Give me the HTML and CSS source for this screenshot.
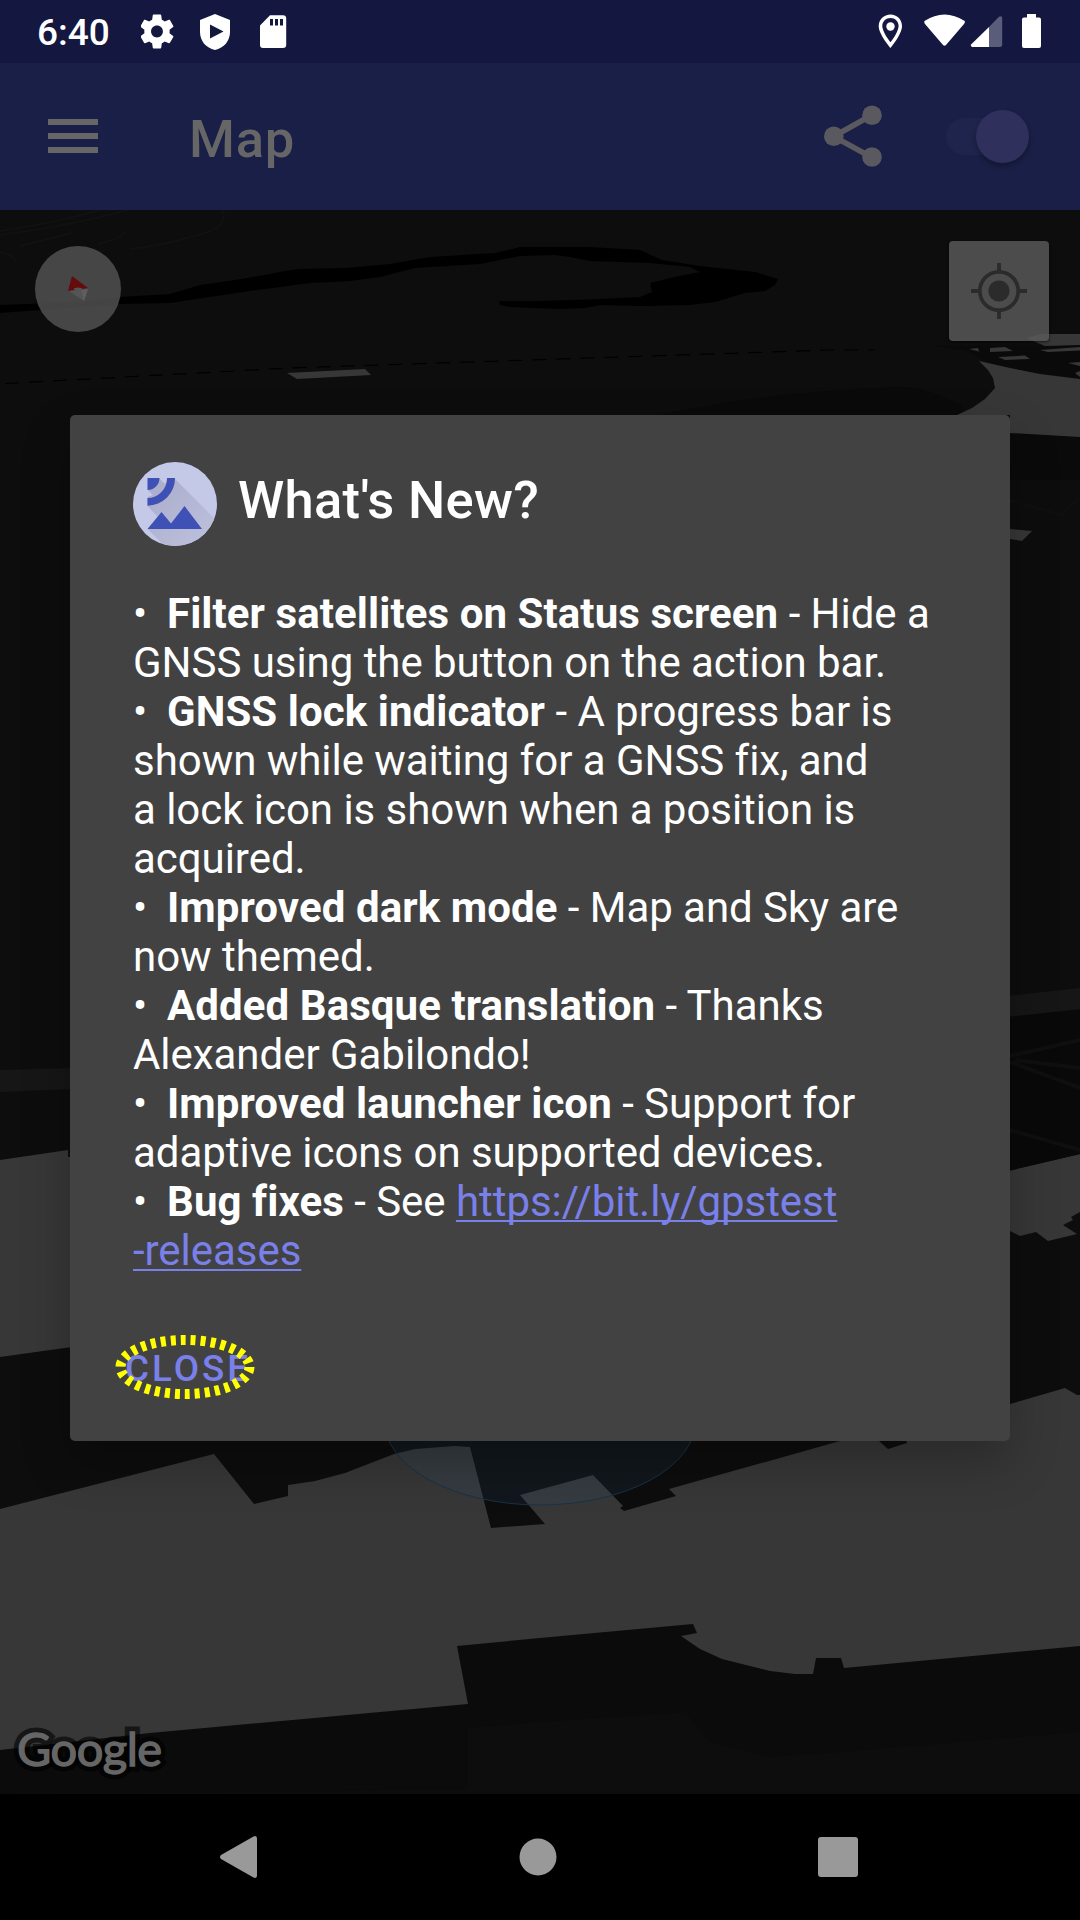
FILE: index.html
```html
<!DOCTYPE html>
<html lang="en">
<head>
<meta charset="utf-8">
<title>Map</title>
<link rel="stylesheet" href="styles.css">
</head>
<body>
<div class="screen">
  <header class="status">
    <span class="clock">6:40</span>
    <svg class="status-left" width="146" height="36" viewBox="141 14 146 36" fill="#fff">
      <g transform="translate(136.7 11.2) scale(1.69)"><path d="M19.43 12.98c.04-.32.07-.64.07-.98s-.03-.66-.07-.98l2.11-1.65c.19-.15.24-.42.12-.64l-2-3.46c-.12-.22-.39-.3-.61-.22l-2.49 1c-.52-.4-1.08-.73-1.69-.98l-.38-2.65C14.46 2.18 14.25 2 14 2h-4c-.25 0-.46.18-.49.42l-.38 2.65c-.61.25-1.17.59-1.69.98l-2.49-1c-.23-.09-.49 0-.61.22l-2 3.46c-.13.22-.07.49.12.64l2.11 1.65c-.04.32-.07.65-.07.98s.03.66.07.98l-2.11 1.65c-.19.15-.24.42-.12.64l2 3.46c.12.22.39.3.61.22l2.49-1c.52.4 1.08.73 1.69.98l.38 2.65c.03.24.24.42.49.42h4c.25 0 .46-.18.49-.42l.38-2.65c.61-.25 1.17-.59 1.69-.98l2.49 1c.23.09.49 0 .61-.22l2-3.46c.12-.22.07-.49-.12-.64l-2.11-1.65zM12 15.5c-1.93 0-3.5-1.57-3.5-3.5s1.57-3.5 3.5-3.5 3.5 1.57 3.5 3.5-1.57 3.5-3.5 3.5z"/></g>
      <path fill-rule="evenodd" d="M215 14 230 20V32C230 41 224 48 215 50 206 48 200 41 200 32V20ZM210 24.500V38.500L223.500 31.500Z"/>
      <path fill-rule="evenodd" d="M270 15.300H283Q286.200 15.300 286.200 18.300V45Q286.200 48 283 48H263Q260 48 260 45V25.500ZM270 19V25.500H273V19ZM275 19V25.500H278V19ZM280 19V25.500H283V19Z"/>
    </svg>
    <svg class="status-right" width="164" height="36" viewBox="878 14 164 36" fill="#fff">
      <path fill-rule="evenodd" d="M890.500 14.500C897 14.500 902 19.500 902 26 902 34.500 890.500 48 890.500 48S878.700 34.500 878.700 26C878.700 19.500 884 14.500 890.500 14.500ZM890.500 18C886 18 882.300 21.500 882.300 26 882.300 30.500 887 38 890.500 42.300 894 38 898.600 30.500 898.600 26 898.600 21.500 895 18 890.500 18Z"/>
      <circle cx="890.500" cy="26.500" r="4.200"/>
      <path d="M924.500 21Q944.500 8 964.700 21 965.300 22.500 964 24L946 45Q944.500 46.500 943 45L925 24Q923.800 22.500 924.500 21Z"/>
      <path d="M989 27V47H972Q970 46 971.300 44.300Z"/><path fill-opacity=".3" d="M989 27 999 16.800Q1002 15 1002.200 18V45Q1002 47 1000 47H989Z"/>
      <path d="M1027 14H1036V17.500H1039Q1041 17.500 1041 19.500V46Q1041 48 1039 48H1024Q1022 48 1022 46V19.500Q1022 17.500 1024 17.500H1027Z"/>
    </svg>
  </header>

  <div class="appbar">
    <div class="menu"><i></i><i></i><i></i></div>
    <h1>Map</h1>
    <svg class="share" width="58" height="63" viewBox="824 105 58 63" fill="#59595f">
      <path d="M872 115 833.500 136.500 872 157.500" fill="none" stroke="#59595f" stroke-width="5.500"/>
      <circle cx="872" cy="115.300" r="9.800"/><circle cx="833.800" cy="136.300" r="9.800"/><circle cx="872" cy="157" r="9.800"/>
    </svg>
    <div class="switch"><i></i></div>
  </div>

  <main class="map">
    <svg class="terrain" width="1080" height="1584" viewBox="0 210 1080 1584">
      <g fill="none" stroke="#111" stroke-width="2">
        <path d="M0 231Q50 224 100 210M0 235Q70 226 128 210M222 210Q232 228 190 237 160 246 130 249M20 246Q60 236 72 233M98 244Q124 238 124 232M0 252Q16 255 15 262"/>
      </g>
      <path d="M0 305 80 302 120 297 170 294 200 285 235 280 270 274 285 271 300 269 345 268 390 264 430 257 495 253 520 247 590 247 640 250 662 260 700 266 755 272 778 279 775 285 765 291 745 293 715 302 690 305 640 306 600 305 585 308 560 309 510 307 500 305 499 301 540 301 600 299 640 297 652 292 650 283 675 277 700 272 690 267 650 263 590 261 570 257 555 255 520 256 500 260 480 264 415 268 380 277 350 281 310 283 250 291 210 297 170 303 120 304 80 307 0 313Z"/>
      <path d="M5 383.500 290 368 830 350 875 350" fill="none" stroke="#000" stroke-width="1.200" stroke-dasharray="14 10"/>
      <path fill="#0a0a0a" d="M660 415Q760 392 900 387 930 388 960 405L970 420H660Z M933 346 1080 345V382L1040 378 990 364 965 350Z M1010 433 1080 437V480H1010Z"/>
      <g fill="#373737">
        <path d="M287 373 365 369 371 375 297 379Z"/>
        <path d="M979 361 1010 368 1040 374 1080 379V437L1010 433V415H957L972 408 985 399 995 388 993 378 988 370Z"/>
        <path d="M1026 338 1040 334H1080V345L1045 346ZM969 349 978 348 979 351.500ZM990 348 1005 347 1013 351 990 352ZM1040 350 1080 347V350.500L1048 352ZM998 357 1025 355.500 1030 359 1005 360ZM1068 363 1080 362V366ZM1075 373 1080 371V377Z"/>
        <path d="M1010 529 1032 531 1022 541 1010 539Z"/>
        <path d="M0 1160 68 1150V1157H72V1347L0 1357Z"/>
        <path d="M1008 1171 1080 1154V1212L1071 1217 1073 1220 1063 1225 1077 1234 1048 1241 1036 1232 1020 1236 1008 1230Z"/>
      </g>
      <path fill="#161616" d="M0 1070 72 1068V1089L0 1092ZM1008 996 1080 988V1009L1008 1017Z"/>
      <path fill="#090909" d="M1008 1017 1080 1010V1154L1008 1171Z"/>
      <path fill="none" stroke="#0f0f0f" stroke-width="4" d="M1010 1056 1080 1040M1015 1060 1080 1068M1010 1062 1080 1088M1010 1130 1080 1150M1010 500 1060 515 1080 498"/>
      <path fill="#0b0b0b" d="M0 1720 450 1640 700 1620 1080 1640V1732L840 1752 770 1757 710 1742 685 1712 540 1722 468 1728V1790L0 1794Z"/>
      <path fill="#373737" d="M0 1509 214 1454 254 1504 288 1496V1485L315 1481 345 1473 394 1454 415 1449 455 1446 470 1447 491 1528 545 1524 520 1495 593 1475 623 1506 620 1508 624 1511 676 1496 669 1489 840 1441H879L888 1449 907 1443 905 1435 1010 1404 1065 1388 1077 1395H1080V1646L844 1668 841 1658H816L813 1674H795L770 1671 722 1659 700 1649 681 1636 697 1633 693 1624 540 1638 457 1646 468 1704 150 1733 0 1750Z"/>
      <ellipse cx="540" cy="1420" rx="156" ry="85" fill="#2c6080" fill-opacity=".13" stroke="#183348" stroke-width="1"/>
    </svg>
    <svg class="compass" width="88" height="88" viewBox="-44 -44 88 88">
      <circle r="43" fill="#555" fill-opacity=".8"/>
      <path fill="#640c0c" d="M-6-13 10-1-10 2Z"/><path fill="#555" d="M-9 2 10 0 6 12Z"/><path fill="#5e5e5e" d="M3 1 10 0 6 12Z"/><ellipse cy="0" rx="4" ry="1.500" fill="#555"/>
    </svg>
    <button class="locate" aria-label="My location">
      <svg width="58" height="58" viewBox="-29 -29 58 58"><circle r="19.200" fill="none" stroke="#2b2b2b" stroke-width="3.700"/><circle r="10.600" fill="#2b2b2b"/><path stroke="#2b2b2b" stroke-width="3.800" d="M0-28V-20M0 20V28M-28 0H-20M20 0H28"/></svg>
    </button>
    <span class="brand">Google</span>
  </main>

  <nav class="nav">
    <svg width="38" height="44" viewBox="0 0 38 44" fill="#999"><path d="M33.500 1.400Q37 0 37 3.500V40.500Q37 44 33.500 42.500L1 24Q-1 22 1 20Z"/></svg>
    <svg width="38" height="38" viewBox="0 0 38 38" fill="#999"><circle cx="19" cy="19" r="18.500"/></svg>
    <svg width="40" height="40" viewBox="0 0 40 40" fill="#999"><rect width="40" height="40" rx="3"/></svg>
  </nav>

  <section class="dialog">
    <div class="title">
      <svg width="84" height="84" viewBox="0 0 84 84">
        <defs>
          <clipPath id="disc"><circle cx="42" cy="42" r="42"/></clipPath>
          <linearGradient id="fade" x1="0" y1="0" x2="1" y2="1"><stop offset="0" stop-color="#a9adcb"/><stop offset="1" stop-color="#c2c6e2"/></linearGradient>
        </defs>
        <circle cx="42" cy="42" r="42" fill="#c5c9e8"/>
        <path clip-path="url(#disc)" fill="url(#fade)" d="M26 16 32 22 35 17H42L96 71V100H47.500L14.500 67 25 55 14.500 44V35L20 33 14.500 28Z"/>
        <path fill="#3f51b5" d="M14.500 16H26.500A12 12 0 0 1 14.500 28ZM34 16H42A27.500 27.500 0 0 1 14.500 43.700V36A19.500 19.500 0 0 0 34 16ZM14.500 67 28.500 50 38 61.500 51.500 44 69 67Z"/>
      </svg>
      <h2>What's New?</h2>
    </div>
    <p class="notes">
      <i>•</i><b>Filter satellites on Status screen</b> - Hide a<br>
      GNSS using the button on the action bar.<br>
      <i>•</i><b>GNSS lock indicator</b> - A progress bar is<br>
      shown while waiting for a GNSS fix, and<br>
      a lock icon is shown when a position is<br>
      acquired.<br>
      <i>•</i><b>Improved dark mode</b> - Map and Sky are<br>
      now themed.<br>
      <i>•</i><b>Added Basque translation</b> - Thanks<br>
      Alexander Gabilondo!<br>
      <i>•</i><b>Improved launcher icon</b> - Support for<br>
      adaptive icons on supported devices.<br>
      <i>•</i><b>Bug fixes</b> - See <a>https://bit.ly/gpstest<br>
      -releases</a>
    </p>
    <div class="close">CLOSE
      <svg class="ring" width="142" height="68" viewBox="-71 -34 142 68"><ellipse rx="64.500" ry="27" fill="none" stroke="#ff0" stroke-width="10" stroke-dasharray="5 5"/></svg>
    </div>
  </section>
</div>
</body>
</html>
```
FILE: styles.css
```css
* { box-sizing: border-box; }
body { margin: 0; background: #000; font-family: Roboto, sans-serif; }
.screen { position: relative; width: 1080px; height: 1920px; overflow: hidden; display: flex; flex-direction: column; }
svg { display: block; flex: none; }
h1, h2, p { margin: 0; }

.status { height: 63px; flex: none; background: #141840; display: flex; align-items: flex-start; padding: 14px 38px 0 37px; color: #fff; }
.clock { width: 104px; font-size: 37px; font-weight: 500; line-height: 38px; }
.status-right { margin-left: auto; }

.appbar { height: 147px; flex: none; background: #191f46; display: flex; align-items: center; padding: 0 51px 0 48px; }
.menu { width: 50px; padding-bottom: 1px; display: flex; flex-direction: column; gap: 8px; }
.menu i { height: 6px; background: #666; }
.appbar h1 { margin-left: 91px; padding-top: 4px; font-size: 52.5px; font-weight: 500; line-height: 60px; letter-spacing: .8px; color: #666; }
.share { margin-left: auto; }
.switch { position: relative; margin-left: 64px; width: 83px; height: 53px; display: flex; align-items: center; justify-content: flex-end; }
.switch::before { content: ""; position: absolute; left: 0; top: 8px; width: 70px; height: 37px; border-radius: 19px; background: #1f244c; }
.switch i { position: relative; width: 53px; height: 53px; border-radius: 50%; background: #2f305b; box-shadow: 0 3px 5px rgba(0,0,0,.28); }

.map { position: relative; height: 1584px; flex: none; background: #0d0d0d; }
.compass { position: absolute; left: 34px; top: 35px; }
.locate { position: absolute; left: 949px; top: 31px; width: 100px; height: 100px; padding: 0; border: 0; border-radius: 4px; background: rgba(90,90,90,.82); display: flex; align-items: center; justify-content: center; box-shadow: 0 1px 3px rgba(0,0,0,.6); }
.brand { position: absolute; left: 17px; top: 1509px; font: 400 47px/58px Lato, sans-serif; letter-spacing: -.5px; color: #666; -webkit-text-stroke: 11px rgba(0,0,0,.6); paint-order: stroke fill; }
.brand::after { content: "Google"; position: absolute; left: 0; top: 0; -webkit-text-stroke: 1.3px #666; }

.nav { height: 126px; flex: none; display: flex; align-items: center; justify-content: space-between; padding: 0 222px 0 220px; }

.dialog { position: absolute; left: 70px; top: 415px; width: 940px; height: 1026px; border-radius: 5px; background: #424242; box-shadow: 0 22px 50px rgba(0,0,0,.24); color: #fff; padding: 47px 63px; display: flex; flex-direction: column; }
.title { display: flex; align-items: center; gap: 21px; height: 84px; }
.title h2 { font-size: 52.5px; font-weight: 500; line-height: 60px; letter-spacing: .3px; padding-bottom: 8px; }
.notes { margin-top: 43px; font-size: 42px; line-height: 49px; letter-spacing: -.04px; white-space: nowrap; }
.notes i { display: inline-block; width: 34px; font-style: normal; }
.notes b { letter-spacing: .08px; }
.notes a { color: #7a80ea; text-decoration: underline; text-decoration-thickness: 2px; text-underline-offset: 4px; text-decoration-skip-ink: none; }
.close { position: relative; margin: 72px 0 0 -8px; width: 130px; font-size: 36.75px; line-height: 44px; font-weight: 500; letter-spacing: 3px; color: #7a80ea; }
.ring { position: absolute; left: -11px; top: -14px; }
```
